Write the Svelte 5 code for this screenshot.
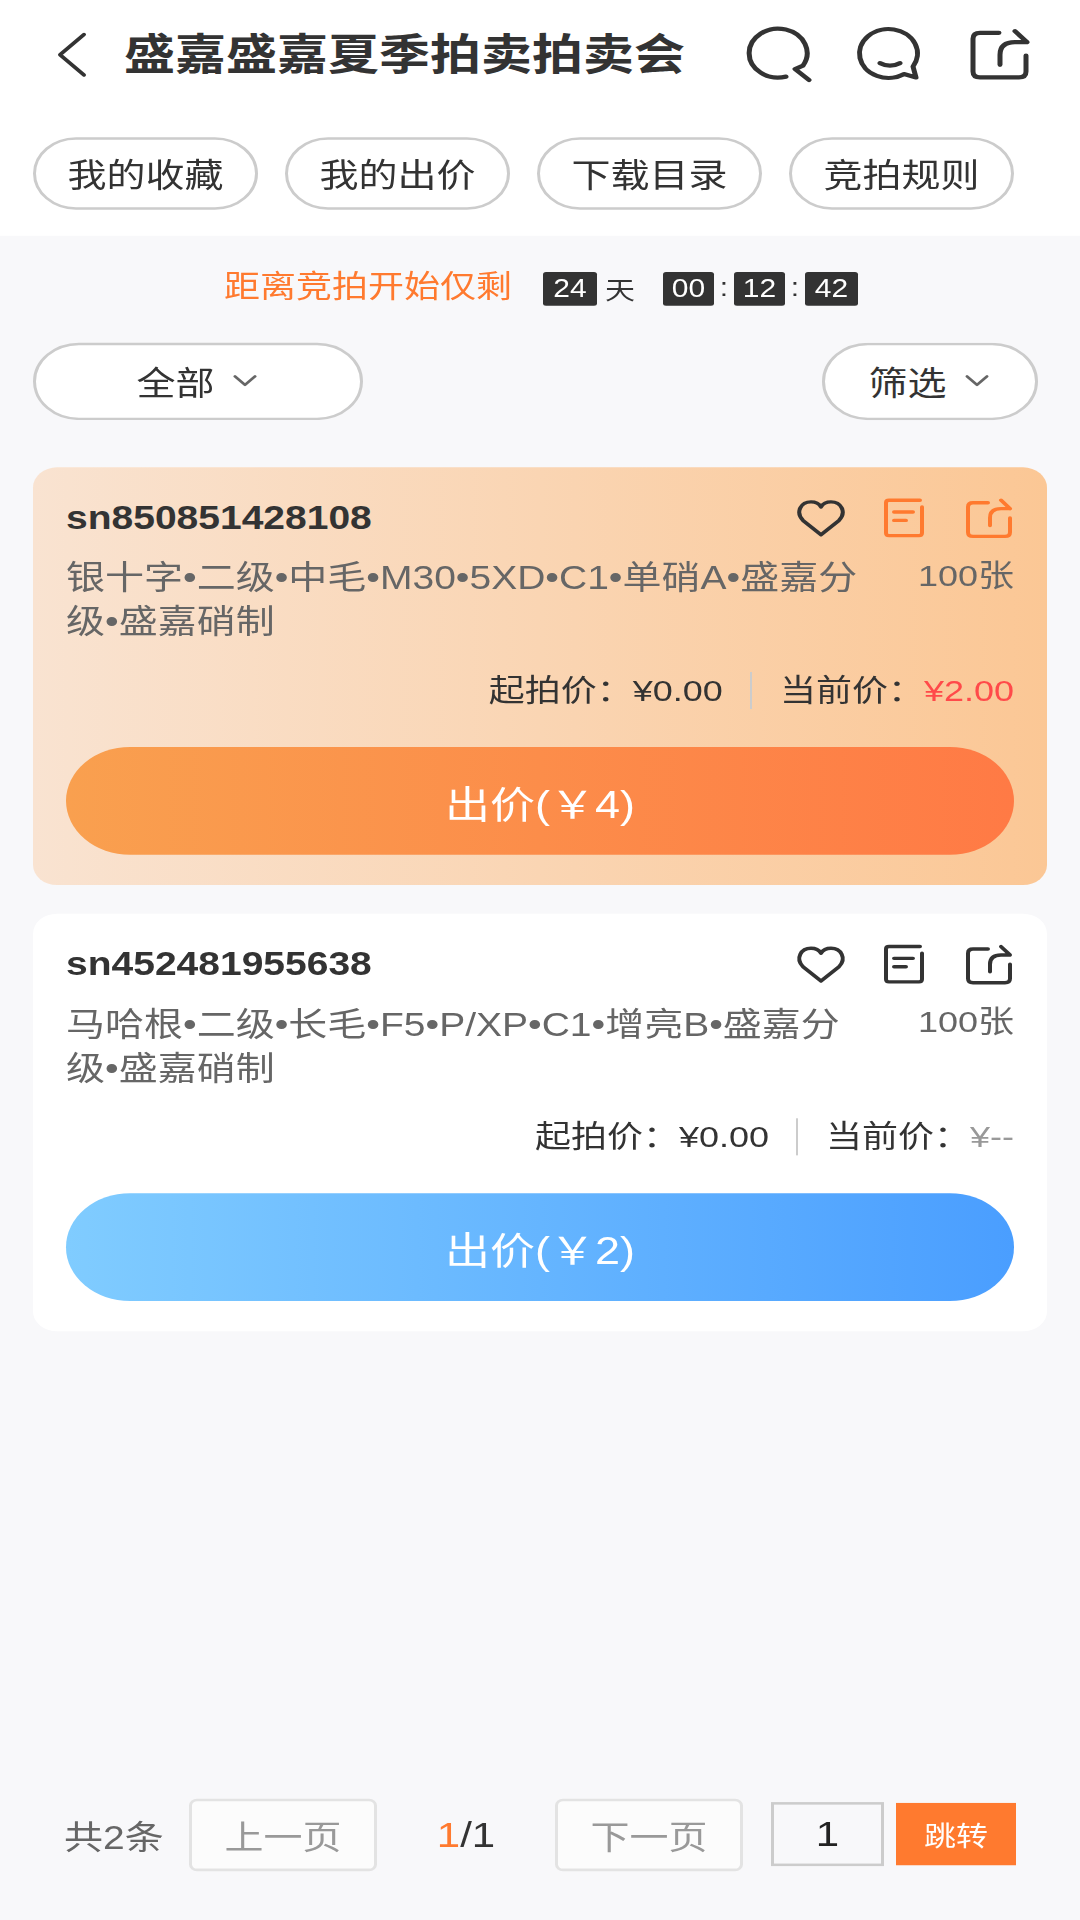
<script>
  const tabs = ['我的收藏', '我的出价', '下载目录', '竞拍规则'];
  const lots = [
    { sn: 'sn850851428108', name: '银十字•二级•中毛•M30•5XD•C1•单硝A•盛嘉分级•盛嘉硝制', qty: '100张', start: '¥0.00', now: '¥2.00', bid: 4, hot: true },
    { sn: 'sn452481955638', name: '马哈根•二级•长毛•F5•P/XP•C1•增亮B•盛嘉分级•盛嘉硝制', qty: '100张', start: '¥0.00', now: '¥--', bid: 2, hot: false }
  ];
</script>

<div class="frame">
  <div class="screen">
    <div class="top">
      <header class="bar">
        <svg class="back" viewBox="0 0 32 54" width="32" height="54"><path d="M29 3 L5 27 L29 51" /></svg>
        <h1>盛嘉盛嘉夏季拍卖拍卖会</h1>
        <div class="bar-icons">
          <svg class="ic" viewBox="0 0 66 66" width="66" height="66"><path d="M39 59 A29 29 0 1 1 56 46 L48 50 L62 63" /></svg>
          <svg class="ic" viewBox="0 0 66 66" width="66" height="66"><path d="M55 47 L58 60 L46 56 A29 29 0 1 1 55 47 Z M22 43 Q32 49 42 43" /></svg>
          <svg class="ic" viewBox="0 0 62 66" width="62" height="66"><path d="M30 7 H11 Q4 7 4 14 V53 Q4 60 11 60 H50 Q57 60 57 53 V34 M31 45 V33 Q31 18 46 18 H58 M46 5 L58 18" /></svg>
        </div>
      </header>
      <nav class="tabs">
        {#each tabs as t}
          <button class="tab">{t}</button>
        {/each}
      </nav>
    </div>

    <div class="count">
      <span class="count-label">距离竞拍开始仅剩</span>
      <span class="box first">24</span>
      <span class="unit">天</span>
      <span class="box">00</span>
      <span class="sep">:</span>
      <span class="box">12</span>
      <span class="sep">:</span>
      <span class="box last">42</span>
    </div>

    <div class="filters">
      <button class="filter all">全部<svg viewBox="0 0 24 14" width="24" height="14"><path d="M2 2 L12 12 L22 2" /></svg></button>
      <button class="filter pick">筛选<svg viewBox="0 0 24 14" width="24" height="14"><path d="M2 2 L12 12 L22 2" /></svg></button>
    </div>

    <main class="list">
      {#each lots as lot}
        <article class="card" class:hot={lot.hot}>
          <div class="card-head">
            <span class="sn">{lot.sn}</span>
            <div class="card-icons">
              <svg class="heart" viewBox="0 0 48 46" width="48" height="46"><path d="M24 43 L6 26 C-2 16 4 4 14 4 C19 4 22 6 24 10 C26 6 29 4 34 4 C44 4 50 16 42 26 Z" /></svg>
              <svg class="mini" viewBox="0 0 42 48" width="42" height="48"><path d="M37 3 H6 Q3 3 3 6 V42 Q3 45 6 45 H36 Q39 45 39 42 V11 M11 17 H30 M11 27 H23" /></svg>
              <svg class="mini share" viewBox="0 0 46 48" width="46" height="48"><path d="M22 6 H7 Q2 6 2 11 V41 Q2 46 7 46 H39 Q44 46 44 41 V24 M24 33 V24 Q24 13 35 13 H44 M35 3 L44 13" /></svg>
            </div>
          </div>
          <div class="info">
            <p class="name">{lot.name}</p>
            <span class="qty">{lot.qty}</span>
          </div>
          <div class="prices">
            <span>起拍价：{lot.start}</span>
            <i class="rule"></i>
            <span>当前价：<b class:red={lot.hot}>{lot.now}</b></span>
          </div>
          <button class="bid">出价(￥{lot.bid})</button>
        </article>
      {/each}
    </main>

    <footer class="pager">
      <span class="total">共2条</span>
      <button class="page-btn">上一页</button>
      <span class="pages"><em>1</em>/1</span>
      <button class="page-btn">下一页</button>
      <span class="jump-input">1</span>
      <button class="jump">跳转</button>
    </footer>
  </div>
</div>

<style>
  :global(body) {
    background: #f8f8fa;
    font-family: "Liberation Sans", "Noto Sans CJK SC", sans-serif;
  }
  .frame { height: 1920px; overflow: hidden; }
  /* source capture is squeezed vertically, everything below is in unsqueezed px */
  .screen {
    width: 1080px;
    height: 2280px;
    display: flex;
    flex-direction: column;
    transform: scaleY(0.8421);
    transform-origin: top left;
    color: #333;
  }
  button { font-family: inherit; background: #fff; color: #333; padding: 0; }
  svg { display: block; fill: none; stroke-linecap: round; stroke-linejoin: round; overflow: visible; }

  .top { background: #fff; height: 280px; }
  .bar { height: 125px; display: flex; align-items: center; padding-left: 55px; }
  .back { margin-top: 5px; }
  .back path { stroke: #333; stroke-width: 4; }
  .bar h1 { margin: -4px 0 0 37px; font-size: 51px; font-weight: 700; color: #333; white-space: nowrap; }
  .bar-icons { display: flex; gap: 45px; margin: 4px 0 0 62px; }
  .ic path { stroke: #333; stroke-width: 5; }

  .tabs { display: flex; gap: 27px; padding: 38px 0 0 33px; }
  .tab { width: 225px; height: 86px; border: 3px solid #ccc; border-radius: 43px; font-size: 39px; padding-bottom: 2px; }

  .count { height: 124px; display: flex; align-items: center; padding-left: 224px; font-size: 36px; }
  .count-label { color: #ff7a2f; width: 319px; white-space: nowrap; margin-top: -10px; }
  .box { background: #333; color: #fff; width: 51px; height: 40px; line-height: 40px; text-align: center; font-size: 30px; border-radius: 3px; margin-top: 2px; }
  .box.first { width: 54px; }
  .box.last { width: 53px; }
  .unit { font-size: 30px; margin: 0 28px 0 8px; }
  .sep { width: 20px; text-align: center; font-size: 30px; color: #333; }

  .filters { display: flex; justify-content: space-between; padding: 3px 42px 0 33px; }
  .filter { height: 92px; border: 3px solid #ccc; border-radius: 46px; font-size: 39px; display: flex; align-items: center; justify-content: center; gap: 18px; padding: 0 3px 2px 0; }
  .filter path { stroke: #666; stroke-width: 3; }
  .filter.all { width: 330px; }
  .filter.pick { width: 216px; }

  .list { display: flex; flex-direction: column; gap: 34px; padding: 56px 33px 0; }
  .card { height: 496px; box-sizing: border-box; background: #fff; border-radius: 24px; padding: 0 33px; }
  .card.hot { background: linear-gradient(90deg, #f9e3d1, #fbc795); }
  .card-head { height: 80px; padding-top: 20px; display: flex; justify-content: space-between; align-items: center; }
  .sn { font-size: 39px; font-weight: 700; color: #333; }
  .card-icons { display: flex; align-items: center; gap: 38px; margin-right: 2px; }
  .heart path { stroke: #333; stroke-width: 4; }
  .mini path { stroke: #333; stroke-width: 4; }
  .mini.share { margin-left: 3px; }
  .hot .mini path { stroke: #ff7a2f; }
  .info { display: flex; justify-content: space-between; align-items: flex-start; margin-top: 6px; }
  .name { margin: 0; width: 800px; font-size: 39px; line-height: 52px; color: #666; }
  .qty { font-size: 36px; line-height: 52px; color: #666; margin-top: -3px; }
  .prices { display: flex; justify-content: flex-end; align-items: center; height: 44px; margin-top: 29px; font-size: 36px; color: #333; white-space: nowrap; }
  .rule { width: 2px; height: 44px; background: #ccc; margin: 8px 28px 0 27px; }
  .prices b { font-weight: 400; color: #999; }
  .prices b.red { color: #ff4a4a; }
  .bid { display: block; width: 100%; height: 128px; margin-top: 49px; border: 0; border-radius: 64px; font-size: 45px; color: #fff; background: linear-gradient(90deg, #80ccff, #4a9eff); }
  .hot .bid { background: linear-gradient(90deg, #f9a04f, #ff7a45); }

  .pager { margin-top: auto; height: 90px; margin-bottom: 56px; display: flex; align-items: center; padding-left: 64px; }
  .total { font-size: 39px; color: #666; width: 125px; white-space: nowrap; }
  .page-btn { width: 188px; height: 86px; box-sizing: border-box; border: 3px solid #e3e3e3; border-radius: 8px; font-size: 39px; color: #999; background: #fcfcfc; }
  .pages { width: 178px; text-align: center; font-size: 42px; color: #333; }
  .pages em { font-style: normal; color: #ff7a2f; }
  .jump-input { width: 113px; height: 76px; box-sizing: border-box; border: 3px solid #ccc; margin: -2px 0 0 28px; font-size: 42px; line-height: 70px; text-align: center; color: #222; }
  .jump { width: 120px; height: 74px; margin: -2px 0 0 12px; border: 0; background: #ff7a2f; color: #fff; font-size: 32px; border-radius: 0; }
</style>
